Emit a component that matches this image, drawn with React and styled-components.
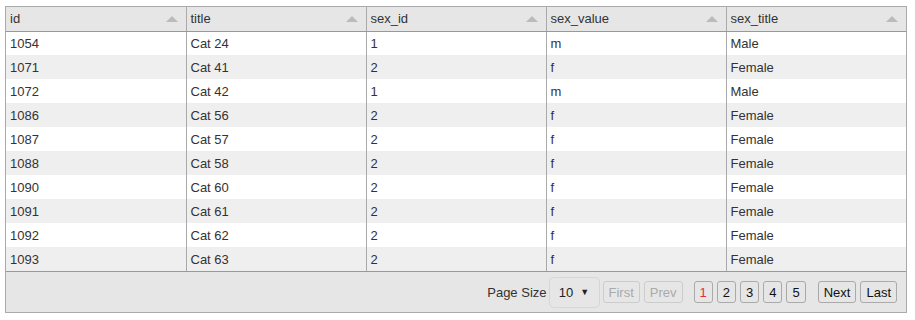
import styled, { createGlobalStyle } from "styled-components";

const GlobalStyle = createGlobalStyle`
  body {
    margin: 0;
    background: #fff;
    font-family: "Liberation Sans", Arial, sans-serif;
  }
`;

const columns = ["id", "title", "sex_id", "sex_value", "sex_title"];

const rows = [
  [1054, "Cat 24", 1, "m", "Male"],
  [1071, "Cat 41", 2, "f", "Female"],
  [1072, "Cat 42", 1, "m", "Male"],
  [1086, "Cat 56", 2, "f", "Female"],
  [1087, "Cat 57", 2, "f", "Female"],
  [1088, "Cat 58", 2, "f", "Female"],
  [1090, "Cat 60", 2, "f", "Female"],
  [1091, "Cat 61", 2, "f", "Female"],
  [1092, "Cat 62", 2, "f", "Female"],
  [1093, "Cat 63", 2, "f", "Female"],
];

const StyledGrid = styled.div`
  margin: 6px 0 0 5px;
  width: 902px;
  box-sizing: border-box;
  border: 1px solid #aaa;
  background: #e6e6e6;
`;

const StyledTable = styled.table`
  width: 100%;
  border-collapse: collapse;
  table-layout: fixed;
  font-size: 13px;
  color: #333;
`;

const StyledHeadCell = styled.th`
  position: relative;
  height: 24px;
  box-sizing: border-box;
  padding: 0 4px 1px;
  text-align: left;
  font-weight: normal;
  background: #e6e6e6;
  border-right: 1px solid #aaa;
  border-bottom: 1px solid #999;
  &:last-child {
    border-right: none;
  }
`;

const StyledSortArrow = styled.span`
  position: absolute;
  right: 8px;
  top: 9px;
  width: 0;
  height: 0;
  border-left: 6px solid transparent;
  border-right: 6px solid transparent;
  border-bottom: 6px solid #bbb;
`;

const StyledRow = styled.tr`
  background: ${(p) => (p.$odd ? "#efefef" : "#fff")};
`;

const StyledCell = styled.td`
  height: 24px;
  padding: 1px 4px 0;
  box-sizing: border-box;
  border-right: 1px solid #aaa;
  white-space: nowrap;
  &:last-child {
    border-right: none;
  }
`;

const StyledFooter = styled.div`
  height: 40px;
  border-top: 1px solid #999;
  display: flex;
  align-items: center;
  justify-content: flex-end;
  padding-right: 9px;
  font-size: 13px;
  color: #333;
`;

const StyledLabel = styled.span`
  margin-right: 2px;
`;

const StyledSelect = styled.div`
  width: 51px;
  height: 31px;
  box-sizing: border-box;
  border: 1px solid #d6d6d6;
  border-radius: 5px;
  display: flex;
  align-items: center;
  justify-content: center;
  gap: 7px;
  color: #222;
  margin-right: 3px;
  font-size: 13px;
  span {
    font-size: 9px;
  }
`;

const StyledButton = styled.button`
  height: 22px;
  padding: 0 5px;
  box-sizing: border-box;
  font-family: inherit;
  font-size: 13px;
  background: #e6e6e6;
  color: ${(p) => (p.$active ? "#e0303a" : p.disabled ? "#aaa" : "#111")};
  border: 1px solid ${(p) => (p.disabled ? "#ccc" : "#aaa")};
  border-radius: 3px;
  margin-left: ${(p) => p.$gap ?? 4}px;
  cursor: pointer;
`;

export default function App() {
  return (
    <>
      <GlobalStyle />
      <StyledGrid>
        <StyledTable>
          <thead>
            <tr>
              {columns.map((c) => (
                <StyledHeadCell key={c}>
                  {c}
                  <StyledSortArrow />
                </StyledHeadCell>
              ))}
            </tr>
          </thead>
          <tbody>
            {rows.map((r, i) => (
              <StyledRow key={r[0]} $odd={i % 2 === 1}>
                {r.map((v, j) => (
                  <StyledCell key={j}>{v}</StyledCell>
                ))}
              </StyledRow>
            ))}
          </tbody>
        </StyledTable>
        <StyledFooter>
          <StyledLabel>Page Size</StyledLabel>
          <StyledSelect>
            10 <span>▼</span>
          </StyledSelect>
          <StyledButton disabled $gap={0}>First</StyledButton>
          <StyledButton disabled>Prev</StyledButton>
          <StyledButton $active $gap={11}>1</StyledButton>
          <StyledButton>2</StyledButton>
          <StyledButton>3</StyledButton>
          <StyledButton>4</StyledButton>
          <StyledButton>5</StyledButton>
          <StyledButton $gap={12}>Next</StyledButton>
          <StyledButton>Last</StyledButton>
        </StyledFooter>
      </StyledGrid>
    </>
  );
}
